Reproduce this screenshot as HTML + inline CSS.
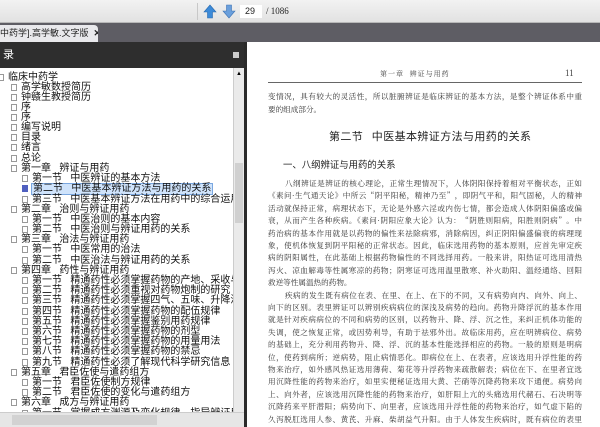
<!DOCTYPE html>
<html><head><meta charset="utf-8">
<style>
*{margin:0;padding:0;box-sizing:border-box}
body{width:600px;height:427px;overflow:hidden;background:#fff;font-family:"Liberation Sans","Noto Sans CJK SC",sans-serif;position:relative}
.abs{position:absolute}
#tb{left:0;top:0;width:600px;height:23px;background:linear-gradient(#f2f2f2,#e2e2e2);border-bottom:1px solid #b8b8b8}
#tabbar{left:0;top:23px;width:600px;height:19px;background:#5e5d64}
#tab{left:0;top:25px;width:98px;height:17px;background:#e9e9ec;border-radius:0 4px 0 0;font-size:9px;line-height:17px;color:#222;white-space:nowrap;overflow:hidden}
#ph{left:0;top:42px;width:246px;height:26px;background:#2e2e2e;color:#fff;font-size:11px;line-height:26px}
#tree{left:0;top:68px;width:233px;height:344px;background:#fff;overflow:hidden}
.r{position:absolute;height:11px;font-size:10px;line-height:11px;white-space:nowrap;color:#111}
.cb{position:absolute;width:6px;height:7px;border:1px solid #999;background:#fff;top:2px}
#vs{left:233px;top:68px;width:11px;height:344px;background:#eaeaea;border-left:1px solid #ccc}
#hs{left:0;top:412px;width:244px;height:15px;background:#e6e6e6;border-top:1px solid #ccc}
#div{left:244px;top:42px;width:3px;height:385px;background:#2a2a2a}
.pl{position:absolute;left:268px;width:314px;font-size:7.6px;line-height:12px;color:#333;font-family:"Noto Serif CJK SC","Liberation Serif",serif;text-align:justify;text-align-last:justify;white-space:nowrap;overflow:hidden}
.nl{text-align-last:left}
</style></head><body>
<div id="tb" class="abs"></div>
<div class="abs" style="left:197px;top:3px;width:1px;height:17px;background:#c8c8c8"></div>
<svg class="abs" style="left:203px;top:4px" width="14" height="15" viewBox="0 0 14 15"><path d="M7 1 L13 8 H9.5 V14 H4.5 V8 H1 Z" fill="#3c8ad8" stroke="#2a6bb0" stroke-width=".6"/></svg>
<svg class="abs" style="left:222px;top:4px" width="14" height="15" viewBox="0 0 14 15"><path d="M7 14 L13 7 H9.5 V1 H4.5 V7 H1 Z" fill="#6a9fdc" stroke="#3f74b5" stroke-width=".6"/></svg>
<div class="abs" style="left:240px;top:5px;width:22px;height:13px;background:#fff;font-size:9px;line-height:13px;padding-left:5px;color:#222">29</div>
<div class="abs" style="left:266px;top:5px;font-size:9px;line-height:13px;color:#222;font-family:'Liberation Serif',serif">/ 1086</div>
<div id="tabbar" class="abs"></div>
<div id="tab" class="abs">中药学].高学敏.文字版&nbsp;&nbsp;<b style="font-size:9px">✕</b></div>
<div id="ph" class="abs">&nbsp;录<span style="position:absolute;left:233px;top:10px;width:6px;height:6px;background:#ccc"></span></div>
<div id="tree" class="abs">
<div class="cb" style="left:-2px;top:6px"></div><div class="r" style="left:8px;top:4px">临床中药学</div>
<div class="cb" style="left:11px;top:16px"></div><div class="r" style="left:21px;top:14px">高学敏数授简历</div>
<div class="cb" style="left:11px;top:26px"></div><div class="r" style="left:21px;top:24px">钟赣生教授简历</div>
<div class="cb" style="left:11px;top:36px"></div><div class="r" style="left:21px;top:34px">序</div>
<div class="cb" style="left:11px;top:46px"></div><div class="r" style="left:21px;top:44px">序</div>
<div class="cb" style="left:11px;top:56px"></div><div class="r" style="left:21px;top:54px">编写说明</div>
<div class="cb" style="left:11px;top:66px"></div><div class="r" style="left:21px;top:64px">目录</div>
<div class="cb" style="left:11px;top:76px"></div><div class="r" style="left:21px;top:74px">绪言</div>
<div class="cb" style="left:11px;top:87px"></div><div class="r" style="left:21px;top:85px">总论</div>
<div class="cb" style="left:11px;top:97px"></div><div class="r" style="left:21px;top:95px">第一章&nbsp;&nbsp;&nbsp;辨证与用药</div>
<div class="cb" style="left:22px;top:107px"></div><div class="r" style="left:32px;top:105px">第一节&nbsp;&nbsp;&nbsp;中医辨证的基本方法</div>
<div class="cb" style="left:22px;top:117px;background:#5060c0;border-color:#5060c0"></div><div class="r" style="left:31px;top:115px;background:#cfe3fb;border:1px solid #7aa7e0;padding:0 1px;height:12px;line-height:10px">第二节&nbsp;&nbsp;&nbsp;中医基本辨证方法与用药的关系</div>
<div class="cb" style="left:22px;top:128px"></div><div class="r" style="left:32px;top:126px">第三节&nbsp;&nbsp;&nbsp;中医基本辨证方法在用药中的综合运用</div>
<div class="cb" style="left:11px;top:138px"></div><div class="r" style="left:21px;top:136px">第二章&nbsp;&nbsp;&nbsp;治则与辨证用药</div>
<div class="cb" style="left:22px;top:148px"></div><div class="r" style="left:32px;top:146px">第一节&nbsp;&nbsp;&nbsp;中医治则的基本内容</div>
<div class="cb" style="left:22px;top:158px"></div><div class="r" style="left:32px;top:156px">第二节&nbsp;&nbsp;&nbsp;中医治则与辨证用药的关系</div>
<div class="cb" style="left:11px;top:168px"></div><div class="r" style="left:21px;top:166px">第三章&nbsp;&nbsp;&nbsp;治法与辨证用药</div>
<div class="cb" style="left:22px;top:178px"></div><div class="r" style="left:32px;top:176px">第一节&nbsp;&nbsp;&nbsp;中医常用的治法</div>
<div class="cb" style="left:22px;top:189px"></div><div class="r" style="left:32px;top:187px">第二节&nbsp;&nbsp;&nbsp;中医治法与辨证用药的关系</div>
<div class="cb" style="left:11px;top:199px"></div><div class="r" style="left:21px;top:197px">第四章&nbsp;&nbsp;&nbsp;药性与辨证用药</div>
<div class="cb" style="left:22px;top:209px"></div><div class="r" style="left:32px;top:207px">第一节&nbsp;&nbsp;&nbsp;精通药性必须掌握药物的产地、采收与贮藏</div>
<div class="cb" style="left:22px;top:219px"></div><div class="r" style="left:32px;top:217px">第二节&nbsp;&nbsp;&nbsp;精通药性必须重视对药物炮制的研究</div>
<div class="cb" style="left:22px;top:229px"></div><div class="r" style="left:32px;top:227px">第三节&nbsp;&nbsp;&nbsp;精通药性必须掌握四气、五味、升降浮沉</div>
<div class="cb" style="left:22px;top:240px"></div><div class="r" style="left:32px;top:238px">第四节&nbsp;&nbsp;&nbsp;精通药性必须掌握药物的配伍规律</div>
<div class="cb" style="left:22px;top:250px"></div><div class="r" style="left:32px;top:248px">第五节&nbsp;&nbsp;&nbsp;精通药性必须掌握鉴别用药规律</div>
<div class="cb" style="left:22px;top:260px"></div><div class="r" style="left:32px;top:258px">第六节&nbsp;&nbsp;&nbsp;精通药性必须掌握药物的剂型</div>
<div class="cb" style="left:22px;top:270px"></div><div class="r" style="left:32px;top:268px">第七节&nbsp;&nbsp;&nbsp;精通药性必须掌握药物的用量用法</div>
<div class="cb" style="left:22px;top:280px"></div><div class="r" style="left:32px;top:278px">第八节&nbsp;&nbsp;&nbsp;精通药性必须掌握药物的禁忌</div>
<div class="cb" style="left:22px;top:291px"></div><div class="r" style="left:32px;top:289px">第九节&nbsp;&nbsp;&nbsp;精通药性必须了解现代科学研究信息</div>
<div class="cb" style="left:11px;top:301px"></div><div class="r" style="left:21px;top:299px">第五章&nbsp;&nbsp;&nbsp;君臣佐使与遣药组方</div>
<div class="cb" style="left:22px;top:311px"></div><div class="r" style="left:32px;top:309px">第一节&nbsp;&nbsp;&nbsp;君臣佐使制方规律</div>
<div class="cb" style="left:22px;top:321px"></div><div class="r" style="left:32px;top:319px">第二节&nbsp;&nbsp;&nbsp;君臣佐使的变化与遣药组方</div>
<div class="cb" style="left:11px;top:331px"></div><div class="r" style="left:21px;top:329px">第六章&nbsp;&nbsp;&nbsp;成方与辨证用药</div>
<div class="cb" style="left:22px;top:342px"></div><div class="r" style="left:32px;top:340px">第一节&nbsp;&nbsp;&nbsp;掌握成方渊源及变化规律，指导辨证用药</div>
</div>
<div id="vs" class="abs"><div style="position:absolute;left:1px;top:95px;width:8px;height:60px;background:#d0d0d0"></div><div style="position:absolute;left:2px;top:3px;font-size:6px">▲</div></div>
<div id="hs" class="abs"><div style="position:absolute;left:12px;top:2px;width:145px;height:10px;background:#d2d2d2"></div></div>
<div id="div" class="abs"></div>
<div class="abs" style="left:247px;top:42px;width:353px;height:385px;background:#fff"></div>
<div class="abs" style="left:380px;top:69px;font-size:7px;color:#444;font-family:'Noto Serif CJK SC',serif;letter-spacing:1px">第一章&nbsp;&nbsp;辨证与用药</div>
<div class="abs" style="left:565px;top:68px;font-size:9px;color:#444;font-family:'Liberation Serif',serif">11</div>
<div class="abs" style="left:268px;top:82px;width:314px;height:1px;background:#666"></div>
<div class="pl" style="top:91px">变情况，具有较大的灵活性，所以脏腑辨证是临床辨证的基本方法，是整个辨证体系中重</div>
<div class="pl nl" style="top:104px">要的组成部分。</div>
<div class="abs" style="left:329px;top:128px;font-size:11px;color:#222;font-family:'Noto Sans CJK SC',sans-serif;letter-spacing:.4px;white-space:nowrap">第二节&nbsp;&nbsp;&nbsp;中医基本辨证方法与用药的关系</div>
<div class="abs" style="left:283px;top:157px;font-size:9.4px;color:#222;font-family:'Noto Sans CJK SC',sans-serif;white-space:nowrap">一、八纲辨证与用药的关系</div>
<div class="pl" style="top:178px;text-indent:17px">八纲辨证是辨证的核心理论，正常生理情况下，人体阴阳保持着相对平衡状态，正如</div>
<div class="pl" style="top:190px">《素问·生气通天论》中所云“阴平阳秘，精神乃至”，即阴气平和，阳气固秘，人的精神</div>
<div class="pl" style="top:203px">活动就保持正常，病理状态下，无论是外感六淫或内伤七情，都会造成人体阴阳偏盛或偏</div>
<div class="pl" style="top:215px">衰，从而产生各种疾病。《素问·阴阳应象大论》认为：“阴胜则阳病，阳胜则阴病”。中</div>
<div class="pl" style="top:228px">药治病的基本作用就是以药物的偏性来祛除病邪，消除病因，纠正阴阳偏盛偏衰的病理现</div>
<div class="pl" style="top:240px">象，使机体恢复到阴平阳秘的正常状态。因此，临床选用药物的基本原则，应首先审定疾</div>
<div class="pl" style="top:252px">病的阴阳属性，在此基础上根据药物偏性的不同选择用药。一般来讲，阳热证可选用清热</div>
<div class="pl" style="top:265px">泻火、凉血解毒等性属寒凉的药物；阴寒证可选用温里散寒、补火助阳、温经通络、回阳</div>
<div class="pl nl" style="top:277px">救逆等性属温热的药物。</div>
<div class="pl" style="top:290px;text-indent:17px">疾病的发生既有病位在表、在里、在上、在下的不同，又有病势向内、向外、向上、</div>
<div class="pl" style="top:302px">向下的区别。表里辨证可以辨别疾病病位的深浅及病势的趋向。药物升降浮沉的基本作用</div>
<div class="pl" style="top:314px">就是针对疾病病位的不同和病势的区别，以药物升、降、浮、沉之性，来纠正机体功能的</div>
<div class="pl" style="top:327px">失调，使之恢复正常，或因势利导，有助于祛邪外出。故临床用药，应在明辨病位、病势</div>
<div class="pl" style="top:339px">的基础上，充分利用药物升、降、浮、沉的基本性能选择相应的药物。一般的原则是明病</div>
<div class="pl" style="top:352px">位，使药到病所；逆病势，阻止病情恶化。即病位在上、在表者，应该选用升浮性能的药</div>
<div class="pl" style="top:364px">物来治疗，如外感风热证选用薄荷、菊花等升浮药物来疏散解表；病位在下、在里者宜选</div>
<div class="pl" style="top:376px">用沉降性能的药物来治疗，如里实便秘证选用大黄、芒硝等沉降药物来攻下通便。病势向</div>
<div class="pl" style="top:389px">上、向外者，应该选用沉降性能的药物来治疗，如肝阳上亢的头痛选用代赭石、石决明等</div>
<div class="pl" style="top:401px">沉降药来平肝潜阳；病势向下、向里者，应该选用升浮性能的药物来治疗，如气虚下陷的</div>
<div class="pl" style="top:414px">久泻脱肛选用人参、黄芪、升麻、柴胡益气升阳。由于人体发生疾病时，既有病位的表里</div>
</body></html>
